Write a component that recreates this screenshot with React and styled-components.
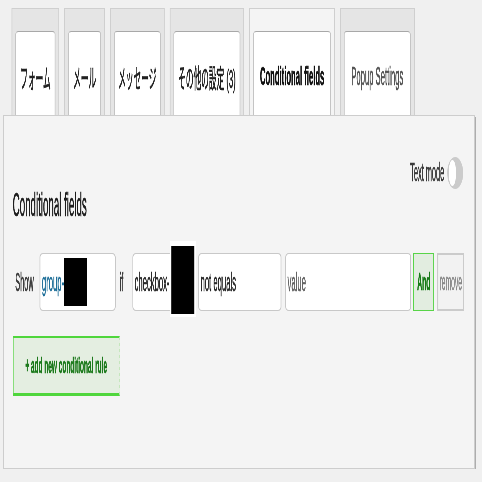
import React from 'react'
import styled, { createGlobalStyle } from 'styled-components'

// the whole screen is drawn wide and squeezed sideways, like the reference;
// x() turns a width seen on screen into the wide drawing's width
const SQUEEZE = 0.295;
const x = (n) => `${n / SQUEEZE}px`;

const GlobalStyle = createGlobalStyle`
  html, body {
    margin: 0;
    background: #f0f0f0;
    overflow: hidden;
    font-family: "Liberation Sans", Arial, "Noto Sans CJK JP", sans-serif;
  }
`;

const Stage = styled.div`
  width: ${x(482)};
  box-sizing: border-box;
  padding: 8px 0 0 ${x(3)};
  transform: scaleX(${SQUEEZE});
  transform-origin: 0 0;
  will-change: transform;
  -webkit-text-stroke: 0.7px;
`;

const TabBar = styled.div`
  display: flex;
  gap: ${x(4.9)};
  margin-left: ${x(8.6)};
`;

const OuterTab = styled.div`
  display: flex;
  height: 107px;
  box-sizing: border-box;
  padding: 22px ${x(3)} 0;
  border: solid #cfcfcf;
  border-width: 1px ${x(1)} 0;
  background: ${({ $active }) => ($active ? '#f4f4f4' : '#e5e5e5')};
`;

const InnerTab = styled.div`
  width: ${({ $w }) => x($w)};
  box-sizing: border-box;
  display: flex;
  align-items: center;
  justify-content: center;
  padding-top: 6px;
  background: #fff;
  border: solid #c4c4c4;
  border-width: 1px ${x(1)} 0;
  border-top-color: #a8a8a8;
  border-radius: ${x(3)} ${x(3)} 0 0 / 3px 3px 0 0;
  font-size: 26px;
  white-space: nowrap;
  font-weight: ${({ $active }) => ($active ? 700 : 400)};
  color: ${({ $color }) => $color || '#222'};
`;

const Panel = styled.div`
  width: ${x(472)};
  height: 354px;
  box-sizing: border-box;
  padding: 40px ${x(10.9)} 0 ${x(8.8)};
  background: #f4f4f4;
  border: solid #cdcdcd;
  border-width: 1px ${x(1)};
  box-shadow: ${x(1)} 2px 0 #adadad;
`;

const ModeRow = styled.div`
  display: flex;
  justify-content: flex-end;
  align-items: center;
  gap: ${x(3)};
  height: 33px;
`;

const ModeLabel = styled.span`
  font-size: 25px;
  color: #3a3a3a;
`;

const Track = styled.div`
  display: flex;
  align-items: center;
  width: ${x(16)};
  height: 32px;
  box-sizing: border-box;
  padding-left: ${x(1.4)};
  border-radius: 50%;
  background: #cbcbcb;
`;

const Knob = styled.div`
  width: ${x(7.5)};
  height: 26px;
  border-radius: 50%;
  background: #fff;
`;

const Heading = styled.h2`
  margin: -3px 0 0;
  font-size: 33px;
  line-height: 38px;
  font-weight: 400;
  color: #1d1d1d;
`;

const RuleRow = styled.div`
  display: flex;
  align-items: center;
  height: 58px;
  margin-top: 29px;
  padding-left: ${x(2.5)};
`;

const Word = styled.span`
  font-size: 25px;
  color: #3a3a3a;
  margin-right: ${({ $mr }) => x($mr)};
`;

const Field = styled.div`
  width: ${({ $w }) => x($w)};
  height: 58px;
  flex-shrink: 0;
  box-sizing: border-box;
  display: flex;
  align-items: center;
  padding-left: ${x(1.4)};
  margin-right: ${({ $mr }) => x($mr ?? 4)};
  background: #fff;
  border: solid #c8c8c8;
  border-width: 1px ${x(1)};
  border-radius: ${x(3.4)} / 4px;
  font-size: 26px;
  color: ${({ $muted }) => ($muted ? '#666' : '#2a2a2a')};
  white-space: nowrap;
`;

const Link = styled.span`
  color: #1f6f99;
`;

const Redact = styled.span`
  display: block;
  flex-shrink: 0;
  width: ${({ $w }) => x($w)};
  height: ${({ $h }) => $h}px;
  margin-top: ${({ $up }) => ($up ? -6 : 0)}px;
  background: #000;
  background-clip: padding-box;
  border: solid #fff;
  border-width: ${({ $ring }) => ($ring ? `5px ${x(2)} 3px` : '0')};
`;

const AndButton = styled.div`
  width: ${x(21)};
  height: 58px;
  flex-shrink: 0;
  box-sizing: border-box;
  display: flex;
  align-items: center;
  justify-content: center;
  margin-right: ${x(3)};
  background: #e2ede0;
  border: solid #58d448;
  border-width: 1px ${x(1)};
  font-size: 23px;
  font-weight: 700;
  color: #177a17;
`;

const RemoveButton = styled.div`
  width: ${x(27)};
  height: 58px;
  flex-shrink: 0;
  box-sizing: border-box;
  display: flex;
  align-items: center;
  justify-content: center;
  background: #f2f2f2;
  border: solid #cbcbcb;
  border-width: 2px ${x(1.4)};
  font-size: 23px;
  color: #8a8a8a;
`;

const AddButton = styled.div`
  width: ${x(107)};
  height: 60px;
  box-sizing: border-box;
  display: flex;
  align-items: center;
  justify-content: center;
  margin-top: 25px;
  background: #e4eee1;
  border-top: 2px solid #4fd63c;
  border-bottom: 3px solid #4fd63c;
  border-left: ${x(1)} solid #6ad95a;
  border-right: ${x(1)} dotted #c5e6bd;
  font-size: 22px;
  font-weight: 700;
  color: #1c7a1c;
`;

const tabs = [
  { label: 'フォーム', w: 40 },
  { label: 'メール', w: 33 },
  { label: 'メッセージ', w: 47 },
  { label: 'その他の設定 (3)', w: 67 },
  { label: 'Conditional fields', w: 78, active: true, color: '#111' },
  { label: 'Popup Settings', w: 67, color: '#555' },
];

export default function App() {
  return (
    <>
      <GlobalStyle />
      <Stage>
        <TabBar>
          {tabs.map((t) => (
            <OuterTab key={t.label} $active={t.active}>
              <InnerTab $w={t.w} $active={t.active} $color={t.color}>
                {t.label}
              </InnerTab>
            </OuterTab>
          ))}
        </TabBar>
        <Panel>
          <ModeRow>
            <ModeLabel>Text mode</ModeLabel>
            <Track>
              <Knob />
            </Track>
          </ModeRow>
          <Heading>Conditional fields</Heading>
          <RuleRow>
            <Word $mr={6}>Show</Word>
            <Field $w={76}>
              <Link>group-</Link>
              <Redact $w={23} $h={48} />
            </Field>
            <Word $mr={9}>if</Word>
            <Field $w={62}>
              checkbox-
              <Redact $w={23} $h={68} $ring $up />
            </Field>
            <Field $w={83}>not equals</Field>
            <Field $w={126} $mr={2} $muted>value</Field>
            <AndButton>And</AndButton>
            <RemoveButton>remove</RemoveButton>
          </RuleRow>
          <AddButton>+ add new conditional rule</AddButton>
        </Panel>
      </Stage>
    </>
  )
}
